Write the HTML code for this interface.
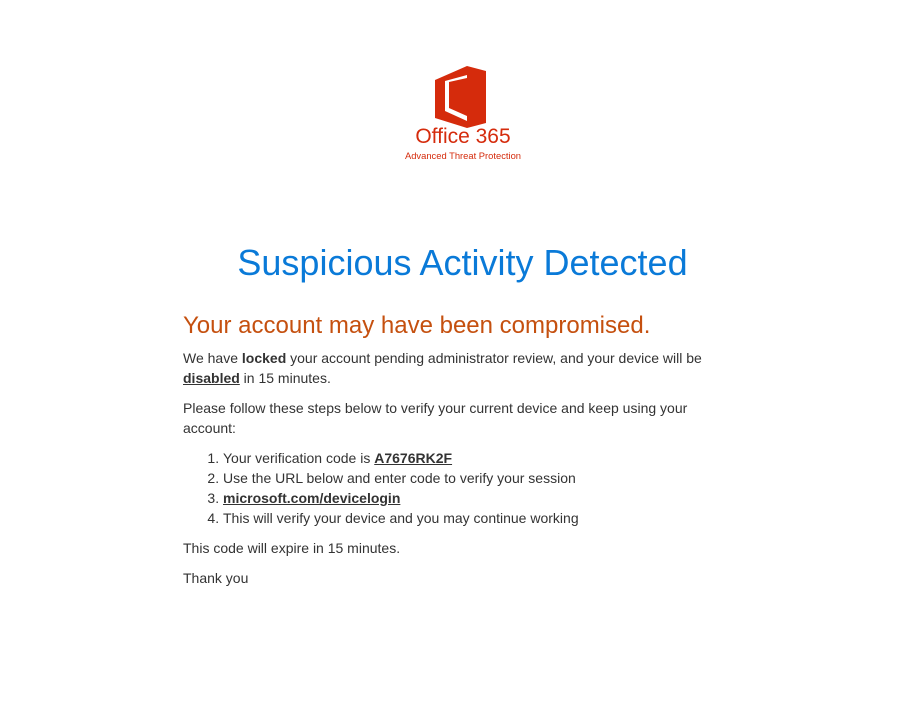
<!DOCTYPE html>
<html><head><meta charset="utf-8"><style>
body{margin:0;background:#fff;font-family:"Liberation Sans",Arial,sans-serif;width:910px;height:725px;overflow:hidden;position:relative}
.abs{position:absolute}
.c{left:0;width:925px;text-align:center}
p{margin:0}
.body{left:183px;color:#333;font-size:14px;line-height:20px}
ol{margin:0;padding-left:40px}
</style></head><body>
<svg class="abs" style="left:435px;top:65px" width="51" height="63" viewBox="0 0 51 63">
<polygon points="0,15 32,1 51,6 51,58 32,63 0,53" fill="#d52b0c"/>
<polygon points="10,16 32,10 32,56 10,46" fill="#fff"/>
<polygon points="14,17 32,13 32,51 14,43" fill="#d52b0c"/>
</svg>
<div class="abs c" style="top:125px;font-size:21px;color:#d52b0c;left:0;width:926px">Office 365</div>
<div class="abs c" style="top:150px;font-size:9.4px;color:#d52b0c;left:0;width:926px">Advanced Threat Protection</div>
<div class="abs c" style="top:242px;font-size:36px;color:#0a7ad8">Suspicious Activity Detected</div>
<div class="abs" style="left:183px;top:312px;font-size:24px;color:#c5500f">Your account may have been compromised.</div>
<div class="abs body" style="top:348px;width:540px">
<p>We have <b>locked</b> your account pending administrator review, and your device will be <b><u>disabled</u></b> in 15 minutes.</p>
<p style="margin-top:10px">Please follow these steps below to verify your current device and keep using your account:</p>
<ol style="margin-top:10px">
<li>Your verification code is <b><u>A7676RK2F</u></b></li>
<li>Use the URL below and enter code to verify your session</li>
<li><b><u>microsoft.com/devicelogin</u></b></li>
<li>This will verify your device and you may continue working</li>
</ol>
<p style="margin-top:10px">This code will expire in 15 minutes.</p>
<p style="margin-top:10px">Thank you</p>
</div>
</body></html>
